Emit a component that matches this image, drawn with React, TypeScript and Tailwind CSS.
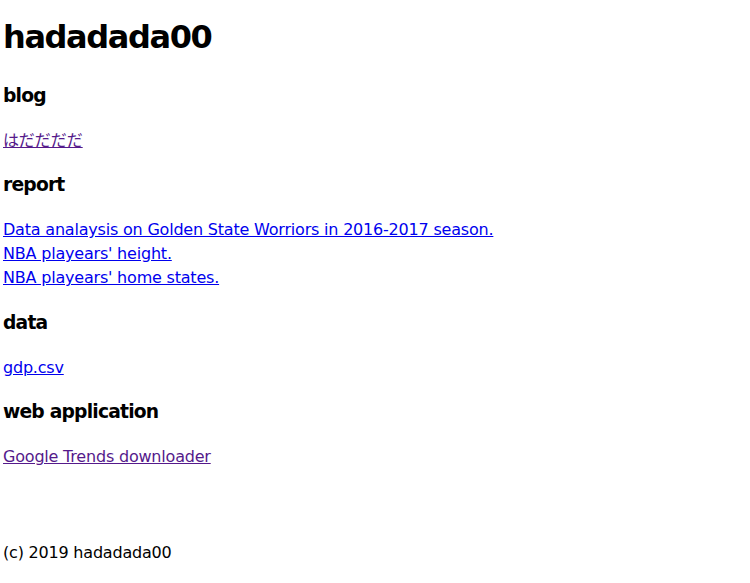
export default function App() {
  const font = { fontFamily: '"DejaVu Sans", "Noto Sans CJK JP", sans-serif' };
  return (
    <div className="min-h-[583px] bg-white px-[3px] text-black" style={font}>
      <h1 className="pt-[13px] text-[32px] font-bold leading-[48px] tracking-[-1.4px]">hadadada00</h1>

      <section>
        <h3 className="mt-[21px] text-[18.72px] font-bold leading-[28px] tracking-[-0.8px]">blog</h3>
        <p className="mt-[18.72px] text-[16px] leading-[24px]">
          <a href="#" className="text-[#551a8b] underline">はだだだだ</a>
        </p>
      </section>

      <section>
        <h3 className="mt-[18.72px] text-[18.72px] font-bold leading-[28px] tracking-[-0.8px]">report</h3>
        <p className="mt-[18.72px] text-[16px] leading-[24px] tracking-[-0.2px]">
          <a href="#" className="text-[#0000ee] underline">Data analaysis on Golden State Worriors in 2016-2017 season.</a>
          <br />
          <a href="#" className="text-[#0000ee] underline">NBA playears' height.</a>
          <br />
          <a href="#" className="text-[#0000ee] underline">NBA playears' home states.</a>
        </p>
      </section>

      <section>
        <h3 className="mt-[18.72px] text-[18.72px] font-bold leading-[28px] tracking-[-0.8px]">data</h3>
        <p className="mt-[18.72px] text-[16px] leading-[24px] tracking-[-0.2px]">
          <a href="#" className="text-[#0000ee] underline">gdp.csv</a>
        </p>
      </section>

      <section>
        <h3 className="mt-[18.72px] text-[18.72px] font-bold leading-[28px] tracking-[-0.8px]">web application</h3>
        <p className="mt-[18.72px] text-[16px] leading-[24px] tracking-[-0.2px]">
          <a href="#" className="text-[#551a8b] underline">Google Trends downloader</a>
        </p>
      </section>

      <footer className="mt-[72px] text-[16px] leading-[24px] tracking-[-0.2px]">(c) 2019 hadadada00</footer>
    </div>
  );
}
